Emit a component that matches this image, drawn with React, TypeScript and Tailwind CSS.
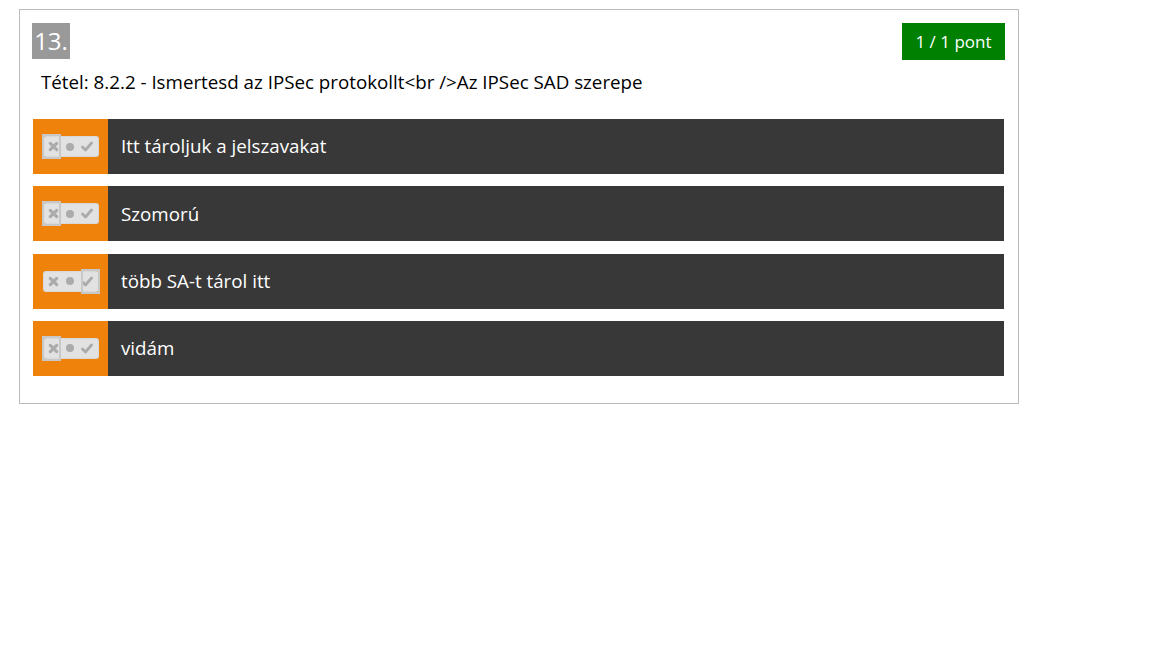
import React from 'react';

type Answer = { text: string; state: 'wrong' | 'right' };

const answers: Answer[] = [
  { text: 'Itt tároljuk a jelszavakat', state: 'wrong' },
  { text: 'Szomorú', state: 'wrong' },
  { text: 'több SA-t tárol itt', state: 'right' },
  { text: 'vidám', state: 'wrong' },
];

function Toggle({ state }: { state: 'wrong' | 'right' }) {
  return (
    <div className="relative flex h-[21px] w-[56px] items-center justify-around rounded-[3px] bg-[#e2e2e2] px-[2px] shadow-[inset_0_0_2px_rgba(0,0,0,0.15)]">
      {/* cross */}
      <svg width="11" height="11" viewBox="0 0 12 12">
        <path d="M2.5 2.5L9.5 9.5M9.5 2.5L2.5 9.5" stroke="#ababab" strokeWidth="3.4" strokeLinecap="round" />
      </svg>
      {/* dot */}
      <svg width="10" height="10" viewBox="0 0 10 10">
        <circle cx="5" cy="5" r="4" fill="#ababab" />
      </svg>
      {/* check */}
      <svg width="12" height="11" viewBox="0 0 12 11">
        <path d="M1.5 6L4.5 9L10.5 2" stroke="#ababab" strokeWidth="2.8" fill="none" strokeLinecap="round" strokeLinejoin="round" />
      </svg>
      {/* selected frame */}
      <div
        className={
          'absolute top-[-2px] h-[25px] w-[19px] border-2 border-[#c8c8c8] ' +
          (state === 'wrong' ? 'left-[-1px]' : 'right-[-1px]')
        }
      />
    </div>
  );
}

export default function App() {
  return (
    <div className="min-h-[648px] bg-white p-[9px_0_0_19px] font-['Open_Sans',sans-serif]">
      <div className="w-[1000px] border border-[#bcbcbc] pl-[13px] pr-[13px] pb-[27px] pt-[13px]">
        {/* Header */}
        <div className="flex items-start justify-between">
          <div className="-ml-px flex h-[36px] w-[38px] items-center justify-center bg-[#999999] text-[24px] leading-none text-white">
            13.
          </div>
          <div className="flex h-[37px] w-[103px] items-center justify-center bg-[#008000] text-[17px] text-white">
            1 / 1 pont
          </div>
        </div>

        {/* Question */}
        <p className="mt-[9px] pl-[8px] text-[18.75px] leading-[26px] text-black">
          Tétel: 8.2.2 - Ismertesd az IPSec protokollt&lt;br /&gt;Az IPSec SAD szerepe
        </p>

        {/* Answers */}
        <div className="mr-px mt-[24px] flex flex-col gap-[12.33px]">
          {answers.map((a) => (
            <div key={a.text} className="flex h-[55px]">
              <div className="flex w-[75px] shrink-0 items-center justify-center bg-[#ee820a]">
                <Toggle state={a.state} />
              </div>
              <div className="flex flex-1 items-center bg-[#383838] pl-[13px] text-[18.75px] text-white">
                {a.text}
              </div>
            </div>
          ))}
        </div>
      </div>
    </div>
  );
}
